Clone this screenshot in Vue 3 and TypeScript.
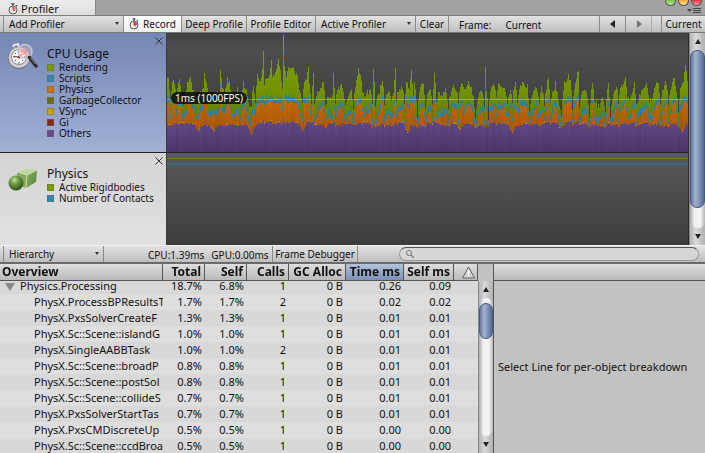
<script setup lang="ts">
import { onMounted, ref } from 'vue'

interface Legend { name: string; color: string }
interface Row { name: string; cells: string[]; parent?: boolean }

const cpuLegend: Legend[] = [
  { name: 'Rendering', color: 'green' },
  { name: 'Scripts', color: 'blue' },
  { name: 'Physics', color: 'orange' },
  { name: 'GarbageCollector', color: 'olive' },
  { name: 'VSync', color: 'yellow' },
  { name: 'Gi', color: 'red' },
  { name: 'Others', color: 'purple' },
]
const physicsLegend: Legend[] = [
  { name: 'Active Rigidbodies', color: 'green' },
  { name: 'Number of Contacts', color: 'blue' },
]

const columns = ['Total', 'Self', 'Calls', 'GC Alloc', 'Time ms', 'Self ms']

const rows: Row[] = [
  { name: 'Physics.Processing', cells: ['18.7%', '6.8%', '1', '0 B', '0.26', '0.09'], parent: true },
  { name: 'PhysX.ProcessBPResultsT', cells: ['1.7%', '1.7%', '2', '0 B', '0.02', '0.02'] },
  { name: 'PhysX.PxsSolverCreateF', cells: ['1.3%', '1.3%', '1', '0 B', '0.01', '0.01'] },
  { name: 'PhysX.Sc::Scene::islandG', cells: ['1.0%', '1.0%', '1', '0 B', '0.01', '0.01'] },
  { name: 'PhysX.SingleAABBTask', cells: ['1.0%', '1.0%', '2', '0 B', '0.01', '0.01'] },
  { name: 'PhysX.Sc::Scene::broadP', cells: ['0.8%', '0.8%', '1', '0 B', '0.01', '0.01'] },
  { name: 'PhysX.Sc::Scene::postSol', cells: ['0.8%', '0.8%', '1', '0 B', '0.01', '0.01'] },
  { name: 'PhysX.Sc::Scene::collideS', cells: ['0.7%', '0.7%', '1', '0 B', '0.01', '0.01'] },
  { name: 'PhysX.PxsSolverStartTas', cells: ['0.7%', '0.7%', '1', '0 B', '0.01', '0.01'] },
  { name: 'PhysX.PxsCMDiscreteUp', cells: ['0.5%', '0.5%', '1', '0 B', '0.00', '0.00'] },
  { name: 'PhysX.Sc::Scene::ccdBroa', cells: ['0.5%', '0.5%', '1', '0 B', '0.00', '0.00'] },
]

const body = ref<HTMLElement | null>(null)
onMounted(() => {
  if (body.value) body.value.scrollTop = 3
})

/* Frame timings: pairs of frame index and height of the stack, as distance from the chart's top. */
const samples = [
  1, 46, 3, 64, 5, 50, 7, 48, 9, 62, 12, 46, 14, 62, 16, 66, 18, 62, 20, 52, 23, 46, 25, 54, 28, 62, 30, 66, 33, 60, 36, 56, 37, 40, 39, 47,
  41, 60, 43, 62, 46, 58, 48, 64, 50, 60, 52, 56, 53, 37, 55, 56, 57, 60, 60, 46, 62, 48, 64, 60, 67, 64, 70, 57, 73, 66, 76, 50,
  78, 55, 81, 66, 84, 68, 86, 52, 88, 67, 90, 40, 92, 49, 94, 42, 95, 36, 96, 18, 97, 50, 99, 46, 102, 43, 104, 27, 105, 45, 107, 42, 109, 36,
  111, 26, 113, 40, 115, 56, 116, 2, 117, 33, 119, 42, 121, 34, 123, 36, 126, 34, 128, 42, 130, 44, 132, 58, 135, 66, 137, 48,
  139, 48, 141, 34, 142, 54, 144, 66, 146, 40, 147, 66, 150, 60, 153, 55, 156, 50, 158, 67, 161, 62, 165, 64, 166, 40, 168, 67,
  171, 55, 174, 51, 176, 60, 178, 68, 181, 62, 184, 60, 186, 70, 189, 49, 191, 35, 193, 44, 195, 57, 197, 63, 199, 58, 201, 61,
  203, 55, 205, 68, 206, 36, 208, 68, 212, 60, 215, 46, 217, 66, 221, 60, 224, 65, 226, 62, 228, 35, 229, 64, 232, 56, 235, 56,
  237, 68, 239, 48, 242, 58, 244, 37, 246, 60, 247, 48, 250, 72, 253, 53, 256, 52, 258, 68, 261, 60, 264, 58, 266, 68, 268, 41,
  270, 65, 273, 60, 276, 63, 279, 56, 282, 68, 286, 53, 290, 56, 292, 66, 294, 52, 296, 48, 298, 58, 302, 49, 304, 54, 307, 62,
  309, 73, 312, 63, 316, 58, 318, 68, 319, 34, 320, 56, 322, 73, 324, 56, 328, 52, 330, 63, 332, 52, 335, 56, 338, 52, 341, 66,
  344, 55, 346, 65, 349, 48, 351, 66, 354, 52, 357, 50, 361, 54, 363, 70, 367, 58, 370, 53, 373, 68, 375, 52, 378, 68, 382, 44,
  384, 65, 387, 58, 389, 51, 392, 64, 395, 71, 398, 50, 400, 48, 402, 44, 404, 49, 406, 68, 409, 48, 412, 38, 413, 68, 416, 60,
  420, 59, 423, 73, 426, 48, 428, 64, 432, 68, 436, 63, 439, 70, 442, 51, 444, 73, 447, 60, 450, 51, 452, 66, 455, 53, 457, 52,
  459, 46, 461, 64, 464, 64, 468, 50, 470, 68, 473, 63, 476, 58, 480, 51, 483, 66, 486, 63, 489, 53, 492, 48, 494, 67, 498, 51,
  500, 50, 502, 67, 505, 56, 507, 46, 509, 50, 512, 71, 514, 58, 517, 48, 519, 32, 521, 48, 522, 56,
]
const spikes = [53, 116, 206, 266, 319, 412]
const dips = [31, 46, 84, 136, 240, 294, 346, 516]

const frameCount = 522
const chartHeight = 119

function noise(i: number): number {
  const v = Math.sin(i * 12.9898 + 4.1) * 43758.5453
  return v - Math.floor(v)
}

const green: number[] = []
const blue: number[] = []
const orange: number[] = []
const purple: number[] = []

let cursor = 0
for (let i = 0; i < frameCount; i++) {
  while (cursor + 2 < samples.length - 2 && samples[cursor + 2] <= i) cursor += 2
  const x0 = samples[cursor]
  const x1 = samples[cursor + 2]
  const t = Math.max(0, Math.min(1, (i - x0) / (x1 - x0)))
  let base = samples[cursor + 1] + (samples[cursor + 3] - samples[cursor + 1]) * t
  if (base > 63) base += (base - 63) * 1.2
  const top = Math.round(base + (base < 40 ? 0 : noise(i) * 6 - 3))
  let rest = 88 + noise(Math.floor(i / 7) + 900) * 4 + noise(i + 40) * 2 + (base - 56) * 0.1
  for (const d of dips) rest += Math.max(0, 8 - Math.abs(i - d) * 2)
  const bottom = Math.round(rest)
  let warm = 73 + Math.max(-6, (base - 53) * 0.9) + noise(i + 300) * 4
  if (spikes.includes(i)) warm = top + 16 + noise(i) * 12
  warm = Math.round(Math.min(bottom - 2, warm))
  green.push(top)
  blue.push(Math.max(top, warm - 3 - Math.round(noise(i + 77) * 4)))
  orange.push(warm)
  purple.push(bottom)
}

function area(tops: number[]): string {
  return `M0 ${chartHeight}` + tops.map((y, i) => `V${y}H${i + 1}`).join('') + `V${chartHeight}Z`
}
const marks = purple
  .map((y, i) => (noise(i + 50) > 0.7 ? `M${i} ${y - 1}h1v1h-1z` : ''))
  .join('')
const streaks = purple
  .map((y, i) => (noise(i + 500) > 0.7 ? `M${i} ${orange[i]}h1V${chartHeight}h-1z` : ''))
  .join('')
</script>

<template>
  <main class="profiler">
    <header class="tabbar">
      <button class="tab" type="button">
        <svg class="watch" viewBox="0 0 10 12" aria-hidden="true">
          <path d="M3.5 .8h3M5 1v2M8 2.2l1 1" stroke="#444" stroke-width="1.3" />
          <circle cx="5" cy="7" r="4" fill="#f4f0f0" stroke="#555" />
          <path d="M5 7V3.5A3.5 3.5 0 0 1 8.5 7z" fill="#f08a90" />
          <path d="M5 4v3l2 1" fill="none" stroke="#b33" />
        </svg>
        <span>Profiler</span>
      </button>
      <div class="window-tools">
        <div class="lights">
          <button class="light go" type="button" aria-label="Zoom"></button>
          <button class="light wait" type="button" aria-label="Minimize"></button>
          <button class="light stop" type="button" aria-label="Close"></button>
        </div>
        <button class="pane-menu" type="button" aria-label="Tab menu">
          <svg viewBox="0 0 14 6" aria-hidden="true">
            <path d="M0 1h5L2.5 4z" fill="#444" />
            <path d="M6 .5h8M6 2.5h8M6 4.5h8" stroke="#444" />
          </svg>
        </button>
      </div>
    </header>

    <div class="toolbar">
      <label class="dropdown add">
        <select aria-label="Add Profiler"><option>Add Profiler</option></select>
        <i class="caret"></i>
      </label>
      <button class="tool record" type="button" aria-pressed="true">
        <svg class="watch" viewBox="0 0 10 12" aria-hidden="true">
          <path d="M3.5 .8h3M5 1v2M8 2.2l1 1" stroke="#444" stroke-width="1.3" />
          <circle cx="5" cy="7" r="4" fill="#f4f0f0" stroke="#555" />
          <path d="M5 7V3.5A3.5 3.5 0 0 1 8.5 7z" fill="#e04a50" />
          <path d="M5 4v3l2 1" fill="none" stroke="#b33" />
        </svg>
        <span>Record</span>
      </button>
      <button class="tool deep" type="button">Deep Profile</button>
      <button class="tool editor" type="button">Profile Editor</button>
      <label class="dropdown active">
        <select aria-label="Active Profiler"><option>Active Profiler</option></select>
        <i class="caret"></i>
      </label>
      <button class="tool clear" type="button">Clear</button>
      <div class="frame"><span>Frame:</span><span>Current</span></div>
      <button class="tool step" type="button" aria-label="Previous frame">
        <svg viewBox="0 0 6 8" aria-hidden="true"><path d="M5 0v8L0 4z" fill="#222" /></svg>
      </button>
      <button class="tool step" type="button" aria-label="Next frame">
        <svg viewBox="0 0 6 8" aria-hidden="true"><path d="M1 0v8l5-4z" fill="#777" /></svg>
      </button>
      <span class="spacer"></span>
      <button class="tool current" type="button">Current</button>
    </div>

    <section class="charts">
      <div class="chart-list">
        <article class="chart-row cpu">
          <div class="info">
            <svg class="badge" viewBox="0 0 30 27" aria-hidden="true">
              <path d="M5 4l1-2 4-1 1 3" fill="none" stroke="#e6e6e6" stroke-width="2" />
              <circle cx="11" cy="15" r="11" fill="#6c6c70" />
              <circle cx="11" cy="14.5" r="10.5" fill="#cfcfd2" />
              <circle cx="11" cy="14" r="7.5" fill="#fafafa" stroke="#8a8a8a" />
              <path d="M11 8v1.5M11 19v1.5M5 14h1.5M16 14h1.5M7 10l1 1M7 18l1-1M15 18l-1-1" stroke="#444" />
              <path d="M11 14l-5-.5M11 14l3-3" stroke="#922" />
              <circle cx="11" cy="14" r="1.5" fill="#933" />
              <circle cx="17" cy="8.500" r="7" fill="#f0bcc4" fill-opacity=".4" stroke="#c0c5d2" stroke-width="1.500" />
              <path d="M12 8l5-3 3 4-4 3z" fill="#f39aa2" fill-opacity=".85" />
              <path d="M21.5 14.5l6.500 8.500" stroke="#2c2c2c" stroke-width="3.500" stroke-linecap="round" />
              <path d="M22.500 14.500l5 6.500" stroke="#999" />
            </svg>
            <div class="legend">
              <h2>CPU Usage</h2>
              <ul>
                <li v-for="item in cpuLegend" :key="item.name">
                  <i class="swatch" :class="item.color"></i>{{ item.name }}
                </li>
              </ul>
            </div>
            <button class="close" type="button" aria-label="Remove CPU Usage">
              <svg viewBox="0 0 8 8" aria-hidden="true"><path d="M.5.5l7 7M7.5.5l-7 7" stroke="#333" /></svg>
            </button>
          </div>
          <div class="plot">
            <svg class="graph" viewBox="0 0 522 119" preserveAspectRatio="none" shape-rendering="crispEdges" role="img" aria-label="CPU time per frame">
              <defs>
                <linearGradient id="g-green" gradientUnits="userSpaceOnUse" x1="0" x2="0" y1="0" y2="90">
                  <stop offset="0" stop-color="#7f9f18" /><stop offset=".6" stop-color="#729500" /><stop offset="1" stop-color="#5d7a08" />
                </linearGradient>
                <linearGradient id="g-orange" gradientUnits="userSpaceOnUse" x1="0" x2="0" y1="60" y2="95">
                  <stop offset="0" stop-color="#cc6f04" /><stop offset="1" stop-color="#a9590a" />
                </linearGradient>
                <linearGradient id="g-purple" gradientUnits="userSpaceOnUse" x1="0" x2="0" y1="86" y2="119">
                  <stop offset="0" stop-color="#654a87" /><stop offset="1" stop-color="#4a3768" />
                </linearGradient>
              </defs>
              <path :d="area(green)" fill="url(#g-green)" />
              <path :d="area(blue)" fill="#2f7f9c" />
              <path :d="area(orange)" fill="url(#g-orange)" />
              <path :d="area(purple)" fill="url(#g-purple)" />
              <path :d="marks" fill="#b99410" />
              <path :d="streaks" fill="#201040" fill-opacity=".06" />
              <path d="M0 66.5H522" stroke="#fff" stroke-opacity=".3" />
            </svg>
            <span class="scale">1ms (1000FPS)</span>
          </div>
        </article>

        <article class="chart-row physics">
          <div class="info">
            <svg class="badge" viewBox="0 0 30 27" aria-hidden="true">
              <defs>
                <radialGradient id="ball" cx=".4" cy=".3" r=".7">
                  <stop offset="0" stop-color="#c4dda6" /><stop offset=".4" stop-color="#6d9a45" /><stop offset="1" stop-color="#2f5420" />
                </radialGradient>
                <linearGradient id="side" x1="0" x2="1" y1="0" y2="1">
                  <stop offset="0" stop-color="#8eb267" /><stop offset="1" stop-color="#547f38" />
                </linearGradient>
              </defs>
              <path d="M9 6l11-3 9 1-10 5z" fill="#bdd59b" />
              <path d="M9 6l10 3-1 13-8-3z" fill="#86a95f" />
              <path d="M19 9l10-5-1 12-10 6z" fill="url(#side)" />
              <path d="M9 6l10 3 10-5M19 9l-1 13" fill="none" stroke="#d3e5b8" stroke-width=".8" />
              <circle cx="8" cy="17" r="7.5" fill="url(#ball)" />
            </svg>
            <div class="legend">
              <h2>Physics</h2>
              <ul>
                <li v-for="item in physicsLegend" :key="item.name">
                  <i class="swatch" :class="item.color"></i>{{ item.name }}
                </li>
              </ul>
            </div>
            <button class="close" type="button" aria-label="Remove Physics">
              <svg viewBox="0 0 8 8" aria-hidden="true"><path d="M.5.5l7 7M7.5.5l-7 7" stroke="#333" /></svg>
            </button>
          </div>
          <div class="plot">
            <div class="line rigid"></div>
            <div class="line contacts"></div>
          </div>
        </article>
      </div>
      <div class="scrollbar">
        <button class="arrow" type="button" aria-label="Scroll up"><i class="up"></i></button>
        <div class="track"><div class="thumb"></div></div>
        <button class="arrow" type="button" aria-label="Scroll down"><i class="down"></i></button>
      </div>
    </section>

    <div class="toolbar details">
      <label class="dropdown hierarchy">
        <select aria-label="View"><option>Hierarchy</option></select>
        <i class="caret"></i>
      </label>
      <div class="stats"><span>CPU:1.39ms</span><span>GPU:0.00ms</span></div>
      <button class="tool debugger" type="button">Frame Debugger</button>
      <label class="search">
        <svg viewBox="0 0 8 8" aria-hidden="true">
          <circle cx="3" cy="3" r="2.5" fill="none" stroke="#777" /><path d="M5 5l3 3" stroke="#777" stroke-width="1.2" />
        </svg>
        <input type="search" aria-label="Search" />
      </label>
    </div>

    <section class="bottom">
      <div ref="body" class="table-scroll">
        <table>
          <colgroup>
            <col class="c-name" /><col class="c-pct" /><col class="c-pct" /><col class="c-pct" />
            <col class="c-gc" /><col class="c-time" /><col class="c-self" /><col class="c-warn" />
          </colgroup>
          <thead>
            <tr>
              <th class="first" scope="col">Overview</th>
              <th v-for="c in columns" :key="c" scope="col" :class="{ sorted: c === 'Time ms' }">{{ c }}</th>
              <th class="warn" scope="col" aria-label="Warnings">
                <svg viewBox="0 0 13 13" aria-hidden="true">
                  <path d="M6.5 1L12.5 12H.5z" fill="#d2d2d2" stroke="#666" stroke-linejoin="round" />
                  <path d="M6.5 4v4M6.5 9v1.5" stroke="#fff" stroke-width="1.5" />
                </svg>
              </th>
            </tr>
          </thead>
          <tbody>
            <tr v-for="row in rows" :key="row.name">
              <td class="name" :class="{ parent: row.parent }"><i v-if="row.parent" class="fold"></i>{{ row.name }}</td>
              <td v-for="(cell, i) in row.cells" :key="i">{{ cell }}</td>
              <td></td>
            </tr>
          </tbody>
        </table>
      </div>
      <div class="scroll-column">
        <div class="scrollbar">
          <button class="arrow" type="button" aria-label="Scroll up"><i class="up"></i></button>
          <div class="track"><div class="thumb"></div></div>
          <button class="arrow" type="button" aria-label="Scroll down"><i class="down"></i></button>
        </div>
      </div>
      <aside class="breakdown">
        <div class="breakdown-head"></div>
        <p>Select Line for per-object breakdown</p>
      </aside>
    </section>
  </main>
</template>

<style>
body { background: #a2a2a2; }
</style>

<style scoped>
* { box-sizing: border-box; }
.profiler {
  display: flex;
  flex-direction: column;
  height: 100vh;
  overflow: hidden;
  background: #c2c2c2;
  color: #111;
  font: 10px/14px "Noto Sans", "Open Sans", sans-serif;
}
button, select, input { font: inherit; color: inherit; border: 0; padding: 0; margin: 0; background: none; }
svg { display: block; }
h2, ul, p { margin: 0; padding: 0; }

.tabbar { display: flex; justify-content: space-between; flex: none; height: 16px; background: #a2a2a2; border-bottom: 1px solid #808080; }
.tab { display: flex; align-items: center; gap: 3px; width: 96px; padding: 2px 8px 0; background: linear-gradient(#ececec, #dedede); border-right: 1px solid #888; font-size: 11px; }
.watch { width: 10px; height: 12px; }
.window-tools { display: flex; flex-direction: column; align-items: flex-end; justify-content: space-between; }
.lights { display: flex; gap: 2px; height: 6px; padding-right: 3px; }
.light { width: 11px; height: 6px; border: 1px solid #555; border-top: 0; border-radius: 0 0 6px 6px; }
.go { background: linear-gradient(#79c246, #b9ec92); }
.wait { background: linear-gradient(#f0a52e, #ffe28f); }
.stop { background: linear-gradient(#e5363c, #ff9a9a); }
.pane-menu { padding: 0 4px 1px; }
.pane-menu svg { width: 14px; height: 6px; }

.toolbar { display: flex; flex: none; height: 17px; background: linear-gradient(#e2e2e2, #bebebe); border-bottom: 1px solid #787878; padding-left: 3px; }
.tool { display: flex; align-items: center; justify-content: center; border-left: 1px solid #8a8a8a; white-space: nowrap; }
.dropdown { position: relative; display: flex; align-items: center; border-left: 1px solid #8a8a8a; }
.dropdown select { appearance: none; width: 100%; height: 100%; padding-left: 5px; outline: 0; }
.caret { position: absolute; right: 4px; top: 6px; border: 2px solid transparent; border-top: 3px solid #333; border-bottom: 0; pointer-events: none; }
.add { width: 120px; }
.record { width: 58px; gap: 4px; background: linear-gradient(#fff, #ededed); }
.deep { width: 65px; }
.editor { width: 69px; }
.active { width: 100px; }
.clear { width: 33px; }
.frame { display: flex; flex: 1; gap: 14px; align-items: center; padding: 2px 0 0 10px; border-left: 1px solid #8a8a8a; }
.step { width: 26px; }
.step svg { width: 6px; height: 8px; }
.spacer { width: 10px; border-left: 1px solid #aaa; }
.current { width: 44px; }

.charts { display: flex; flex: none; }
.chart-list { flex: 1; min-width: 0; background: #3c3c3c; border-right: 1px solid #2c2c2c; }
.chart-row { display: flex; }
.cpu { height: 120px; border-bottom: 1px solid #242424; }
.physics { height: 92px; }
.info { display: flex; flex: none; align-items: flex-start; width: 166px; padding: 4px 3px 0 8px; }
.cpu .info { background: linear-gradient(#7486b4, #a1b0d4); }
.physics .info { background: linear-gradient(#d4d4d4, #e1e1e1); }
.badge { flex: none; width: 30px; height: 27px; margin-top: 6px; }
.physics .badge { margin-top: 9px; }
.legend { flex: 1; padding: 9px 0 0 9px; }
h2 { font-size: 12px; line-height: 16px; font-weight: 400; }
ul { list-style: none; }
li { display: flex; align-items: center; gap: 5px; height: 11px; line-height: 11px; white-space: nowrap; }
.swatch { width: 7px; height: 7px; outline: 1px solid #6668; outline-offset: -1px; }
.green { background: #7b9d00; }
.blue { background: #3389ad; }
.orange { background: #d27200; }
.olive { background: #706c10; }
.yellow { background: #c9a500; }
.red { background: #8e2408; }
.purple { background: #67498c; }
.close { flex: none; height: 8px; }
.close svg { width: 8px; height: 8px; }
.plot { position: relative; flex: 1; min-width: 0; margin-left: 1px; }
.cpu .plot { background: linear-gradient(#404040, #4d4d4d 12%, #383838); }
.physics .plot { padding-top: 5px; background: linear-gradient(#595959, #3d3d3d); }
.graph { width: 100%; height: 119px; }
.scale { position: absolute; left: 4px; top: 59px; padding: 0 4px; border-radius: 6px; background: #0a0a0ad9; color: #fff; line-height: 12px; }
.line { height: 1px; }
.rigid { background: #77801f; margin-bottom: 4px; }
.contacts { height: 2px; background: #3a6a78; }

.scrollbar { display: flex; flex-direction: column; width: 15px; background: linear-gradient(90deg, #b4b4b4, #dadada 40%, #b0b0b0); border-left: 1px solid #888; }
.arrow { display: flex; flex: none; align-items: center; justify-content: center; height: 17px; }
.up { border: 3px solid transparent; border-bottom: 5px solid #222; border-top: 0; }
.down { border: 3px solid transparent; border-top: 5px solid #222; border-bottom: 0; }
.track { flex: 1; padding: 0 0 20px; border-radius: 7px; background: linear-gradient(90deg, #aaa, #f0f0f0 30%, #f4f4f4 70%, #b5b5b5); }
.thumb { height: 100%; border: 1px solid #46597c; border-radius: 7px; background: linear-gradient(90deg, #6379a2, #a2b3ce 35%, #7187ad 75%, #566c94); }
.charts .scrollbar { width: 16px; }

.details { height: 19px; border-top: 1px solid #f0f0f0; border-bottom: 2px solid #6a6a6a; }
.hierarchy { width: 101px; border-right: 1px solid #8a8a8a; }
.stats { display: flex; flex: none; gap: 7px; width: 168px; padding: 2px 0 0 44px; white-space: nowrap; }
.debugger { flex: none; width: 86px; border-right: 1px solid #8a8a8a; }
.search { display: flex; flex: 1; align-items: center; height: 14px; margin: 1px 6px 0 41px; padding: 0 6px; background: #d6d6d6; border: 1px solid #999; border-top-color: #555; border-radius: 7px; }
.search svg { flex: none; width: 8px; height: 8px; }
.search input { flex: 1; min-width: 0; height: 10px; outline: 0; appearance: none; }

.bottom { display: flex; flex: 1; min-height: 0; }
.table-scroll { flex: 0 0 478px; overflow: hidden; background: #ddd; }
table { width: 100%; table-layout: fixed; border-collapse: separate; border-spacing: 0; }
.c-name { width: 163px; }
.c-pct { width: 42px; }
.c-gc { width: 57px; }
.c-time { width: 58px; }
.c-self { width: 50px; }
thead th { position: sticky; top: 0; z-index: 1; height: 17px; padding: 0 3px 0 0; text-align: right; white-space: nowrap; font: 700 12px/16px "Noto Sans", sans-serif; background: linear-gradient(#dedede, #b9b9b9); border-right: 1px solid #555; border-bottom: 1px solid #555; }
thead .first { padding: 0 0 0 2px; text-align: left; }
thead .sorted { background: linear-gradient(#b4c3da, #7c91b8); }
.warn svg { width: 13px; height: 13px; }
thead .warn { padding: 0 0 0 8px; }
td { height: 16px; padding: 0 3px 0 0; text-align: right; white-space: nowrap; overflow: hidden; font: 11px/16px "Noto Sans", sans-serif; }
tbody tr { background: #dedede; }
tbody tr:nth-child(odd) { background: #d8d8d8; }
td.name { position: relative; padding: 0 0 0 34px; text-align: left; }
td.parent { padding-left: 20px; }
.fold { position: absolute; left: 5px; top: 5px; border: 5px solid transparent; border-top: 8px solid #888; border-bottom: 0; }

.scroll-column { flex: none; width: 15px; display: flex; padding-top: 17px; }
.scroll-column .track { padding: 5px 0 0; }
.scroll-column .thumb { height: 36px; }
.breakdown { display: flex; flex: 1; flex-direction: column; min-width: 0; border-left: 1px solid #555; font-size: 11px; line-height: 16px; }
.breakdown-head { height: 17px; background: linear-gradient(#dedede, #b9b9b9); border-bottom: 1px solid #555; }
.breakdown p { margin: auto 0; padding-left: 4px; white-space: nowrap; }
</style>
